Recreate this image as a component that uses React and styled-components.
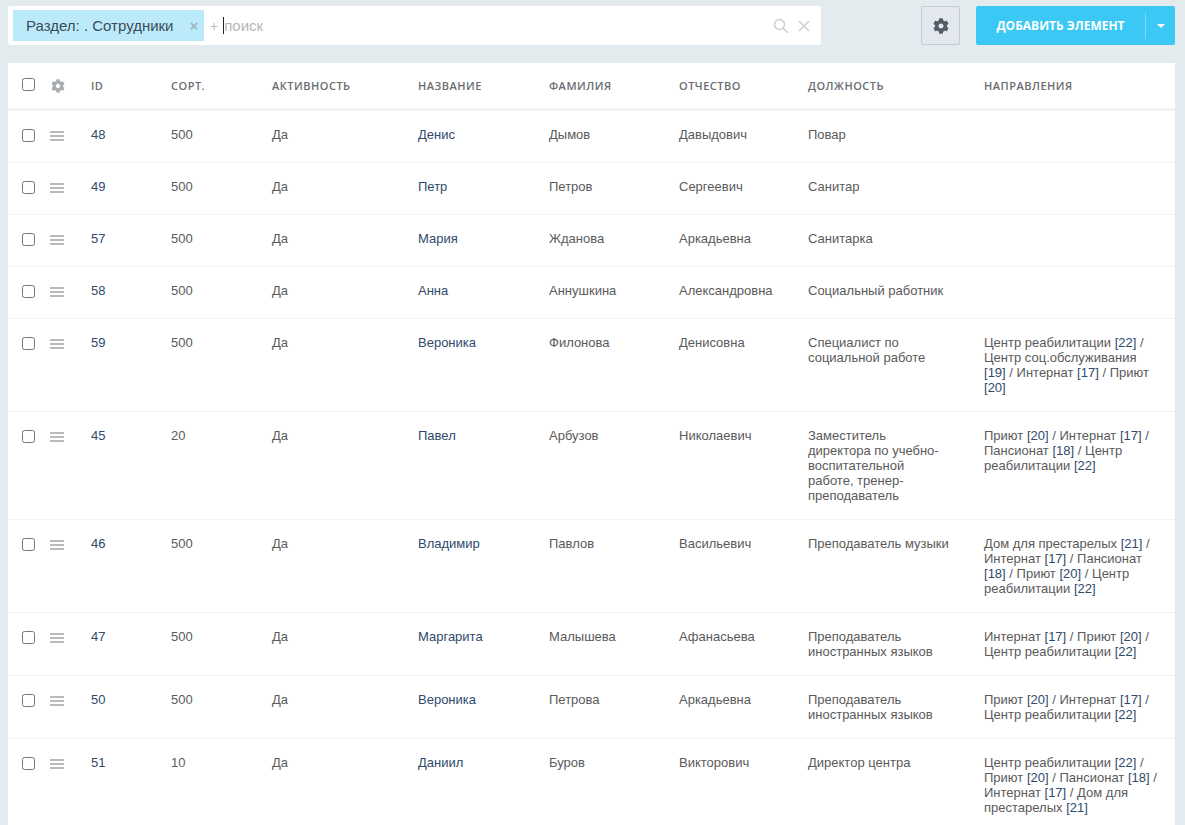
import React from 'react';
import styled, { createGlobalStyle } from 'styled-components';
import { FaCog } from 'react-icons/fa';

const Global = createGlobalStyle`
  html, body { margin: 0; padding: 0; height: 825px; overflow: hidden; background: #e4ebee; }
  body { font-family: "Liberation Sans", Arial, sans-serif; }
`;
const Page = styled.div`
  height: 825px;
  overflow: hidden;
  padding: 6px 10px 0 8px;
  box-sizing: border-box;
`;
const Toolbar = styled.div`
  display: flex;
  height: 39px;
  margin-bottom: 18px;
`;
const SearchBar = styled.div`
  width: 813px;
  background: #fff;
  border-radius: 2px;
  display: flex;
  align-items: center;
  padding: 0 10px 0 5px;
  box-sizing: border-box;
  margin-right: 100px;
`;
const Chip = styled.div`
  width: 191px;
  height: 31px;
  background: #bbebfb;
  display: flex;
  align-items: center;
  padding-left: 13px;
  padding-right: 4px;
  box-sizing: border-box;
  font-size: 15px;
  color: #3b4c55;
  justify-content: space-between;
`;
const ChipClose = styled.span`
  color: #9fb6c0;
  font-size: 15px;
  font-weight: 700;
  width: 12px;
  text-align: center;
`;
const Plus = styled.span`
  color: #b8bcc0;
  font-size: 14px;
  margin-left: 6px;
  margin-right: 5px;
`;
const Caret = styled.span`
  width: 1px;
  height: 17px;
  background: #222;
`;
const Placeholder = styled.span`
  color: #b4b8bc;
  font-size: 15px;
  flex: 1;
`;
const ClearIcon = styled.svg`
  width: 12px;
  height: 12px;
  margin-left: 9px;
  margin-right: 1px;
`;
const SearchIcon = styled.svg`
  width: 16px;
  height: 16px;
`;
const GearButton = styled.button`
  width: 39px;
  height: 39px;
  padding: 0;
  border: 1px solid #c6ccd1;
  border-radius: 2px;
  background: #e3e8ee;
  color: #535c69;
  font-size: 16px;
  display: flex;
  align-items: center;
  justify-content: center;
  margin-right: 16px;
`;
const AddButton = styled.div`
  width: 199px;
  height: 39px;
  background: #3bc8f5;
  border-radius: 2px;
  display: flex;
  align-items: center;
  color: #fff;
  font-family: "Open Sans", sans-serif;
  font-size: 12px;
  font-weight: 700;
`;
const AddLabel = styled.span`
  width: 170px;
  text-align: center;
  border-right: 1px solid #7edcf8;
  line-height: 26px;
  box-sizing: border-box;
`;
const AddCaret = styled.span`
  flex: 1;
  display: flex;
  justify-content: center;
  &::before {
    content: "";
    border-left: 4px solid transparent;
    border-right: 4px solid transparent;
    border-top: 4px solid #fff;
  }
`;
const Table = styled.table`
  width: 1167px;
  table-layout: fixed;
  border-collapse: separate;
  border-spacing: 0;
  background: #fff;
`;
const HeadCell = styled.th`
  height: 48px;
  box-sizing: border-box;
  padding: 0 0 0 ${p => p.$pl || 0}px;
  border-bottom: 3px solid #f0f2f3;
  text-align: left;
  font-family: "Open Sans", sans-serif;
  font-size: 11px;
  font-weight: 600;
  letter-spacing: 0.5px;
  color: #696d71;
  text-transform: uppercase;
`;
const Cell = styled.td`
  box-sizing: border-box;
  height: 52px;
  padding: 16px ${p => p.$pr || 8}px 16px ${p => p.$pl || 0}px;
  font-size: 13px;
  line-height: 15px;
  color: #5a5a5a;
  vertical-align: top;
  border-bottom: 1px solid #f1f3f4;
`;
const Link = styled.a`
  color: #2f4a6b;
  text-decoration: none;
`;
const Check = styled.input.attrs({ type: 'checkbox' })`
  width: 13px;
  height: 13px;
  display: block;
  margin: ${p => (p.$head ? '0 0 2px' : '2px 0 0')};
`;
const DragIcon = styled.svg`
  width: 14px;
  height: 10px;
  display: block;
  margin-top: 4px;
`;
const HeadGear = styled(FaCog)`
  color: #a9adb1;
  font-size: 14px;
  display: block;
  margin-left: 1px;
`;

const widths = [42, 41, 80, 101, 146, 131, 130, 129, 176, 191];
const heads = ['ID', 'Сорт.', 'Активность', 'Название', 'Фамилия', 'Отчество', 'Должность', 'Направления'];
const rows = [
  [48, 500, 'Денис', 'Дымов', 'Давыдович', 'Повар', []],
  [49, 500, 'Петр', 'Петров', 'Сергеевич', 'Санитар', []],
  [57, 500, 'Мария', 'Жданова', 'Аркадьевна', 'Санитарка', []],
  [58, 500, 'Анна', 'Аннушкина', 'Александровна', 'Социальный работник', []],
  [59, 500, 'Вероника', 'Филонова', 'Денисовна', 'Специалист по социальной работе', [['Центр реабилитации', 22], ['Центр соц.обслуживания', 19], ['Интернат', 17], ['Приют', 20]]],
  [45, 20, 'Павел', 'Арбузов', 'Николаевич', 'Заместитель директора по учебно-воспитательной работе, тренер-преподаватель', [['Приют', 20], ['Интернат', 17], ['Пансионат', 18], ['Центр реабилитации', 22]]],
  [46, 500, 'Владимир', 'Павлов', 'Васильевич', 'Преподаватель музыки', [['Дом для престарелых', 21], ['Интернат', 17], ['Пансионат', 18], ['Приют', 20], ['Центр реабилитации', 22]]],
  [47, 500, 'Маргарита', 'Малышева', 'Афанасьева', 'Преподаватель иностранных языков', [['Интернат', 17], ['Приют', 20], ['Центр реабилитации', 22]]],
  [50, 500, 'Вероника', 'Петрова', 'Аркадьевна', 'Преподаватель иностранных языков', [['Приют', 20], ['Интернат', 17], ['Центр реабилитации', 22]]],
  [51, 10, 'Даниил', 'Буров', 'Викторович', 'Директор центра', [['Центр реабилитации', 22], ['Приют', 20], ['Пансионат', 18], ['Интернат', 17], ['Дом для престарелых', 21]]],
];

export default function App() {
  return (
    <Page>
      <Global />
      <Toolbar>
        <SearchBar>
          <Chip>Раздел: . Сотрудники<ChipClose>×</ChipClose></Chip>
          <Plus>+</Plus>
          <Caret />
          <Placeholder>поиск</Placeholder>
          <SearchIcon viewBox="0 0 16 16" fill="none" stroke="#cdd0d3" strokeWidth="1.6">
            <circle cx="6.5" cy="6.5" r="5" />
            <path d="M10.2 10.2L15 15" />
          </SearchIcon>
          <ClearIcon viewBox="0 0 12 12" fill="none" stroke="#cdd0d3" strokeWidth="1.5">
            <path d="M1 1l10 10M11 1L1 11" />
          </ClearIcon>
        </SearchBar>
        <GearButton><FaCog /></GearButton>
        <AddButton>
          <AddLabel>ДОБАВИТЬ ЭЛЕМЕНТ</AddLabel>
          <AddCaret />
        </AddButton>
      </Toolbar>
      <Table>
        <colgroup>{widths.map((w, i) => <col key={i} width={w} />)}</colgroup>
        <thead>
          <tr>
            <HeadCell $pl={14}><Check $head /></HeadCell>
            <HeadCell><HeadGear /></HeadCell>
            {heads.map(h => <HeadCell key={h}>{h}</HeadCell>)}
          </tr>
        </thead>
        <tbody>
          {rows.map(r => (
            <tr key={r[0]}>
              <Cell $pl={14}><Check /></Cell>
              <Cell>
                <DragIcon viewBox="0 0 14 10" fill="#b8bbbe">
                  <rect y="0" width="14" height="2" />
                  <rect y="4" width="14" height="2" />
                  <rect y="8" width="14" height="2" />
                </DragIcon>
              </Cell>
              <Cell><Link>{r[0]}</Link></Cell>
              <Cell>{r[1]}</Cell>
              <Cell>Да</Cell>
              <Cell><Link>{r[2]}</Link></Cell>
              <Cell>{r[3]}</Cell>
              <Cell>{r[4]}</Cell>
              <Cell $pr={34}>{r[5]}</Cell>
              <Cell $pr={15}>
                {r[6].map(([n, id], i) => (
                  <React.Fragment key={id}>
                    {i > 0 && ' / '}{n} <Link>[{id}]</Link>
                  </React.Fragment>
                ))}
              </Cell>
            </tr>
          ))}
        </tbody>
      </Table>
    </Page>
  );
}
